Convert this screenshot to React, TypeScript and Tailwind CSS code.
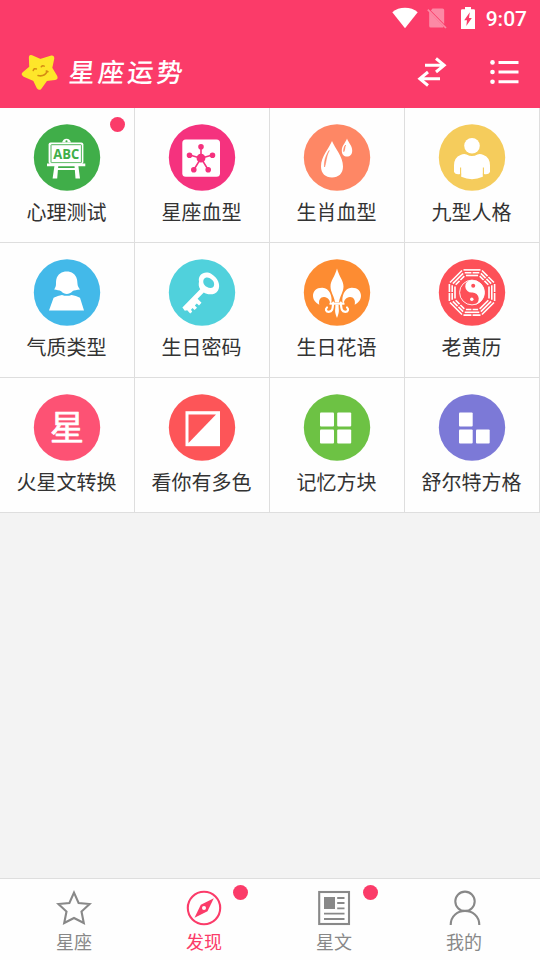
import type { ReactNode } from 'react';

const FONT = "font-['Noto_Sans_CJK_SC',sans-serif]";

function StatusBar() {
  return (
    <div className="flex h-9 items-center justify-end pr-[13px] text-white">
      <svg width="26" height="22" viewBox="0 0 26 22" fill="currentColor" className="mr-[9px]">
        <path d="M13 21.3 L0.3 5.2 C7 -0.6 19 -0.6 25.7 5.2 Z" />
      </svg>
      <svg width="20" height="22" viewBox="0 0 20 22" className="mr-[14px] opacity-40">
        <path d="M5.5 1.5 H15.5 Q17.2 1.5 17.2 3 V17 L3.9 3.5 Z" fill="currentColor" />
        <path d="M2.2 4.8 L16.2 19.2 V20.5 H3.7 Q2.2 20.5 2.2 19 Z" fill="currentColor" />
        <path d="M0.8 2.6 L19 21" stroke="currentColor" strokeWidth="1.7" />
      </svg>
      <svg width="14" height="22" viewBox="0 0 14 22" className="mr-[11px]">
        <path d="M4 0 H10 V2.3 H12.8 Q14 2.3 14 3.5 V22 H0 V3.5 Q0 2.3 1.2 2.3 H4 Z" fill="#fff" />
        <path d="M8.8 5.3 L3.2 13.2 H6 L5.3 19 L10.8 11 H8 Z" fill="#fb3b69" />
      </svg>
      <span className="pt-px font-[Roboto,sans-serif] text-[21px] leading-9 font-medium">9:07</span>
    </div>
  );
}

function Header() {
  return (
    <header className="h-[108px] bg-[#fb3b69]">
      <StatusBar />
      <div className="flex h-[72px] items-center pr-[21px] pl-[21px] text-white">
        <svg width="37" height="38" viewBox="0 0 37 38">
          <path
            d="M10.8 3 L19.3 6.8 L30.5 3.3 Q32.7 3 32.5 5.5 L30.5 15 L35.6 23.5 Q36.6 26 34 26.3 L25.5 27.3 L19.8 35.4 Q18 37 16.5 34.8 L12.8 27.2 L3 23 Q0.3 21.4 2.2 19.7 L9 14 L8.6 4.5 Q8.8 2.2 10.8 3 Z"
            fill="#fee62a"
            stroke="#fee62a"
            strokeWidth="1.5"
            strokeLinejoin="round"
          />
          <path
            d="M12.2 17.5 Q13.2 14.8 15.4 16 M20.3 13.8 Q21.5 12.2 23.2 13.2 M17 22.6 Q23.6 24 26.2 18.4 M25.2 18 L27 18.8"
            fill="none"
            stroke="#d58b13"
            strokeWidth="1.5"
            strokeLinecap="round"
          />
        </svg>
        <h1 className="ml-[11px] -skew-x-6 pb-[3px] text-[26px] leading-[37px] font-medium tracking-[3.3px]">星座运势</h1>
        <svg width="30" height="30" viewBox="0 0 30 30" fill="none" stroke="currentColor" strokeWidth="3" className="ml-auto">
          <path d="M8 8.2 H27 M19 1.5 L27.2 8.2 L19 15" />
          <path d="M23 21.8 H3 M11 15 L2.8 21.8 L11 28.5" />
        </svg>
        <svg width="30" height="26" viewBox="0 0 30 26" fill="currentColor" className="ml-[42px]">
          <circle cx="3.5" cy="3.4" r="2.3" />
          <circle cx="3.5" cy="13" r="2.3" />
          <circle cx="3.5" cy="22.7" r="2.3" />
          <path d="M9.5 1.9 H29.5 V4.9 H9.5 Z M9.5 11.5 H29.5 V14.5 H9.5 Z M9.5 21.2 H29.5 V24.2 H9.5 Z" />
        </svg>
      </div>
    </header>
  );
}

const board = (
  <g>
    <path d="M28 18 Q29 14.2 32.5 14.2 Q36 14.2 37 18" fill="#fff" />
    <circle cx="32.5" cy="16.8" r="1.1" fill="#40ae49" />
    <rect x="14.6" y="18" width="34.8" height="21.5" rx="2" fill="#fff" />
    <rect x="17" y="20.2" width="30.4" height="18" rx=".5" fill="#fff" stroke="#40ae49" strokeWidth=".9" />
    <path d="M13 39 H51.3 V41.7 H13 Z" fill="#fff" />
    <path d="M20.5 41 H24.3 L23.2 54 H18.6 Z M40.5 41 H44.3 L46 54 H41.5 Z M23 43.6 H41.5 V45.5 H23 Z" fill="#fff" />
    <text x="32.2" y="34.2" textAnchor="middle" fill="#40ae49" fontSize="14" fontWeight="700" textLength="26" lengthAdjust="spacingAndGlyphs" className="font-['Open_Sans',sans-serif]">
      ABC
    </text>
  </g>
);

const molecule = (
  <g fill="#f5327e" stroke="#f5327e" strokeWidth="1.6">
    <rect x="13.3" y="15" width="37.7" height="37.3" rx="3.5" fill="#fff" stroke="none" />
    <path d="M32 33.7 V22 M32 33.7 L20.7 30.5 M32 33.7 L43.3 30.5 M32 33.7 L25 45 M32 33.7 L39 45" />
    <circle cx="32" cy="33.7" r="3.6" />
    <circle cx="32" cy="22.2" r="2" />
    <circle cx="20.5" cy="30.7" r="2" />
    <circle cx="43.5" cy="30.7" r="2" />
    <circle cx="24.8" cy="45.2" r="2" />
    <circle cx="39.2" cy="45.2" r="2" />
  </g>
);

const drops = (
  <g fill="#fff">
    <path d="M28 16.5 C31 24 39 32 39 42 C39 49 34.5 53 28 53 C21.5 53 17 49 17 42 C17 32 25 24 28 16.5 Z" />
    <path d="M43 14 C44.2 18 48.2 21 48.2 26 C48.2 30 46 32 43 32 C40 32 37.8 30 37.8 26 C37.8 21 41.8 18 43 14 Z" />
    <path d="M25.2 26 C21.5 31.5 20 37 20.5 42.5 C22 39 22 32 25.2 26 Z M41.6 20.5 C39.7 23 39.5 25 39.8 27.2 C41 25 40.7 22.5 41.6 20.5 Z" fill="#fe8765" stroke="#fe8765" strokeWidth=".6" />
  </g>
);

const person = (
  <g fill="#fff">
    <circle cx="33" cy="21.3" r="7.8" />
    <path d="M21.5 30.5 Q25 28.8 27.5 30 Q33 33 38.5 30 Q41 28.8 44.5 30.5 Q51 33 51 41 V47.5 Q49.5 50.5 44.8 49.5 L43.8 49 V52.3 Q33 57 22.2 52.3 V49 L21.2 49.5 Q16.5 50.5 15 47.5 V41 Q15 33 21.5 30.5 Z" />
    <path d="M21.6 43 V50 M44.4 43 V50" stroke="#f5cc5c" strokeWidth="1.1" />
  </g>
);

const woman = (
  <g fill="#fff">
    <path d="M20.2 30 C23 26 21.5 24 22.3 20 C23.5 14.5 28 12 32.7 12 C37.5 12 41.8 14.5 43 20 C43.8 24 42.8 26 46 30 C43 30.5 40 30.6 38.5 31.8 C35 35.5 30.5 35.5 27.2 31.8 C25.5 30.6 22.5 30.5 20.2 30 Z" />
    <path d="M19.6 38.2 Q24 36.2 28 35.5 Q32.8 37.2 37.6 35.5 Q42 36.2 46 38.2 L50 51 H15 Z" />
  </g>
);

const keyIcon = (
  <g fill="#fff">
    <path fillRule="evenodd" d="M30 22 C28.5 15 36 10.5 42.5 14.5 C49 18.5 52 25.5 49 31 C46.5 36 38 35.5 34.8 33 L28.6 39.2 L32.5 43.2 L30 46 L27.8 44 L25.8 46 L28 48.2 L25.5 50.5 L23.5 48.5 L22 50.2 L23.2 52.2 L21.2 54 L18.2 50.8 L15.8 51.2 L13.4 48 L31.2 29.8 C29.5 27 29.5 25 30 22 Z M34.8 19.8 C32.8 23.5 36.5 28.5 41.5 28.5 C46 28.5 46 23.5 43.5 20.8 C41 17.8 36.5 16.8 34.8 19.8 Z" />
  </g>
);

const lilyPetal = 'M27.3 43.5 C28.8 37 25.5 28.5 18.5 28.2 C12.5 28 9 31.3 9 36.5 C9.2 41 12 43.2 15.3 45.3 C14.3 40.5 16.5 37.3 20.2 37.5 C24 37.8 25.5 40.5 26.3 43.5 Z';
const lilyCurl = 'M29.3 43 C28.5 47 29.5 52 24.7 52.3 C22 52.3 21 49.8 23 48';

const lily = (
  <g fill="#fff">
    <path d="M33 9 C35 17 39.5 21 39.5 27 C39.5 33 35.8 36 35 43 H31 C30.2 36 26.5 33 26.5 27 C26.5 21 31 17 33 9 Z" />
    <path d="M31.4 45 H34.6 C34.5 51 36 51 33 58.5 C30 51 31.5 51 31.4 45 Z" />
    <path d="M25.5 43.2 H40.5 V45.2 H25.5 Z" />
    <path d={lilyPetal} />
    <path d={lilyCurl} fill="none" stroke="#fff" strokeWidth="2.2" strokeLinecap="round" />
    <g transform="matrix(-1 0 0 1 66 0)">
      <path d={lilyPetal} />
      <path d={lilyCurl} fill="none" stroke="#fff" strokeWidth="2.2" strokeLinecap="round" />
    </g>
  </g>
);

// Eight trigrams, clockwise from the top; each lists its bars from the outer one in, true = unbroken.
const trigrams = [
  [true, false, true],
  [false, false, false],
  [false, true, true],
  [true, true, true],
  [false, true, false],
  [true, false, false],
  [false, false, true],
  [true, true, false],
];

const bagua = (
  <g transform="translate(33 33)">
    {trigrams.map((bars, i) => (
      <g key={i} transform={`rotate(${i * 45})`} stroke="#fff" strokeWidth="1.6">
        {bars.map((solid, j) => {
          const half = 8.5 - j * 1.2;
          const y = -22.6 + j * 2.8;
          return <path key={j} d={solid ? `M${-half} ${y} H${half}` : `M${-half} ${y} H-0.6 M0.6 ${y} H${half}`} />;
        })}
      </g>
    ))}
    <circle r="12.4" fill="#fd5058" stroke="#fff" strokeWidth=".9" />
    <g transform="rotate(-4)">
      <path d="M0 -12.6 A12.6 12.6 0 0 1 0 12.6 A6.3 6.3 0 0 0 0 0 A6.3 6.3 0 0 1 0 -12.6 Z" fill="#fff" />
    </g>
    <circle cx="1.2" cy="-6.8" r="2" fill="#fd5058" />
    <circle cx="-.2" cy="6.8" r="1.7" fill="#fff" />
  </g>
);

const star = (
  <text x="33" y="45.5" textAnchor="middle" fill="#fff" stroke="#fff" strokeWidth=".7" strokeLinejoin="round" fontSize="34" fontWeight="400" className={FONT}>
    星
  </text>
);

const diagonal = (
  <g>
    <rect x="16.5" y="16.7" width="34.5" height="35" fill="#fff" />
    <path d="M19.5 20 H47 L19.5 48.5 Z" fill="#fd5558" />
  </g>
);

const fourBlocks = (
  <g fill="#fff">
    <rect x="16" y="18" width="14" height="14" rx="1" />
    <rect x="33.2" y="18" width="14" height="14" rx="1" />
    <rect x="16" y="35" width="14" height="14" rx="1" />
    <rect x="33.2" y="35" width="14" height="14" rx="1" />
  </g>
);

const threeBlocks = (
  <g fill="#fff">
    <rect x="20" y="18" width="13.7" height="14" rx="1" />
    <rect x="20" y="35" width="13.7" height="14" rx="1" />
    <rect x="37" y="35" width="13.7" height="14" rx="1" />
  </g>
);

type Item = { label: string; color: string; art: ReactNode; dot?: boolean };

const items: Item[] = [
  { label: '心理测试', color: '#40ae49', art: board, dot: true },
  { label: '星座血型', color: '#f5327e', art: molecule },
  { label: '生肖血型', color: '#fe8765', art: drops },
  { label: '九型人格', color: '#f5cc5c', art: person },
  { label: '气质类型', color: '#43b9e9', art: woman },
  { label: '生日密码', color: '#50d1dc', art: keyIcon },
  { label: '生日花语', color: '#fd8c32', art: lily },
  { label: '老黄历', color: '#fd5058', art: bagua },
  { label: '火星文转换', color: '#fd5274', art: star },
  { label: '看你有多色', color: '#fd5558', art: diagonal },
  { label: '记忆方块', color: '#6dc244', art: fourBlocks },
  { label: '舒尔特方格', color: '#7c79d7', art: threeBlocks },
];

function Badge({ className }: { className: string }) {
  return <span className={`absolute size-[15px] rounded-full bg-[#fb3b69] ${className}`} />;
}

function Cell({ item }: { item: Item }) {
  return (
    <div className="relative flex h-[135px] flex-col items-center border-r border-b border-[#dedede] bg-[#fefefe] pt-4">
      <svg width="68" height="67" viewBox="-1 -0.5 68 67">
        <circle cx="33" cy="33" r="33.2" fill={item.color} />
        {item.art}
      </svg>
      <span className="mt-[6px] pr-px text-[20px] leading-[30px] whitespace-nowrap text-[#333]">{item.label}</span>
      {item.dot && <Badge className="top-[9px] right-[9px]" />}
    </div>
  );
}

const tabs: { label: string; active?: boolean; dot?: boolean; art: ReactNode }[] = [
  {
    label: '星座',
    art: <path d="M18 2.6 L22.6 13 L33.6 14 L25.5 21.5 L27.8 33 L18 28 L8.2 33 L10.5 21.5 L2.4 14 L13.4 13 Z" />,
  },
  {
    label: '发现',
    active: true,
    dot: true,
    art: (
      <>
        <circle cx="18" cy="18" r="16.2" />
        <path d="M27.8 8.2 L21.5 21.2 L8.5 27.8 L14.8 14.8 Z" fill="currentColor" stroke="none" />
        <circle cx="18" cy="18" r="2" fill="#fefefe" stroke="none" />
      </>
    ),
  },
  {
    label: '星文',
    dot: true,
    art: (
      <>
        <rect x="3.2" y="2" width="29.8" height="32" />
        <rect x="8" y="7" width="11" height="12" fill="currentColor" stroke="none" />
        <path d="M21.2 8 H28.5 M21.2 13 H28.5 M21.2 18.3 H28.5 M8 23.7 H28.5 M8 29 H28.5" strokeWidth="1.8" />
      </>
    ),
  },
  {
    label: '我的',
    art: (
      <>
        <circle cx="19" cy="11.3" r="9.7" />
        <path d="M4.7 35 C4.7 16.2 33.3 16.2 33.3 35" />
      </>
    ),
  },
];

export default function App() {
  return (
    <div className={`flex h-[960px] w-[540px] flex-col overflow-hidden bg-[#f3f3f3] ${FONT}`}>
      <Header />
      <main className="grid flex-1 grid-cols-4 content-start">
        {items.map((item) => (
          <Cell key={item.label} item={item} />
        ))}
      </main>
      <nav className="flex h-[82px] border-t border-[#dedede] bg-[#fefefe] pl-[9px]">
        {tabs.map((tab) => (
          <div key={tab.label} className={`relative flex w-[130px] flex-col items-center pt-[11px] ${tab.active ? 'text-[#fb3b69]' : 'text-[#888]'}`}>
            <svg width="36" height="36" viewBox="0 0 36 36" fill="none" stroke="currentColor" strokeWidth="2.1">
              {tab.art}
            </svg>
            <span className="mt-[2px] text-[18px] leading-[26px]">{tab.label}</span>
            {tab.dot && <Badge className="top-[6px] right-[21px]" />}
          </div>
        ))}
      </nav>
    </div>
  );
}
